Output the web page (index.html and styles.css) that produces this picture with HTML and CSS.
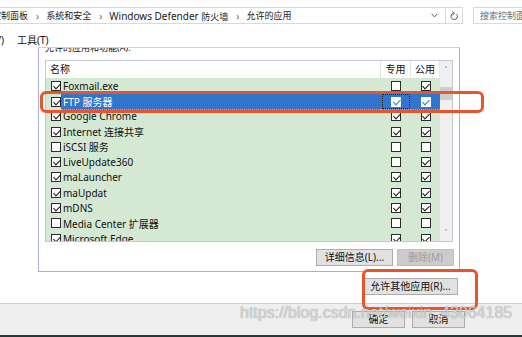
FILE: index.html
```html
<!DOCTYPE html>
<html lang="zh-CN">
  <head>
    <meta charset="UTF-8">
    <title>允许的应用</title>
    <link rel="stylesheet" href="styles.css">
  </head>
  <body>
    <div class="window">
      <div class="addressbar">
        <div class="crumbs">
          <span class="zh">控制面板</span><span class="sep">›</span>
          <span class="zh">系统和安全</span><span class="sep">›</span>
          <span>Windows Defender <span class="zh">防火墙</span></span><span class="sep">›</span>
          <span class="zh">允许的应用</span>
          <span class="crumbs-tools">
            <svg width="7" height="5" viewBox="0 0 7 5"><path d="M0.5 0.8 L3.5 3.8 L6.5 0.8" fill="none" stroke="#555" stroke-width="1"/></svg>
            <span class="divider"></span>
            <svg width="9" height="10" viewBox="0 0 9 10"><path d="M6.6 3.2 A3.2 3.2 0 1 1 3.2 2.3" fill="none" stroke="#555" stroke-width="1"/><path d="M2.4 0.6 L4.4 2.3 L2.6 4" fill="none" stroke="#555" stroke-width="1"/></svg>
          </span>
        </div>
        <div class="search">搜索控制面板</div>
      </div>

      <div class="menubar">
        <span class="menu-cut">查看(V)</span>
        <span>工具(T)</span>
      </div>

      <div class="content">
        <div class="frame">
          <div class="frame-label">允许的应用和功能(A):</div>
          <div class="listbox">
            <div class="list-main">
              <div class="list-head">
                <span class="head-name">名称</span>
                <span class="head-col">专用</span>
                <span class="head-col">公用</span>
              </div>
              <div class="row">
                <span class="cell-cb"><i class="cb on"></i></span><span class="cell-name">Foxmail.exe</span>
                <span class="cell-c"><i class="cb"></i></span><span class="cell-c"><i class="cb on"></i></span>
              </div>
              <div class="row selected">
                <span class="cell-cb"><i class="cb on"></i></span><span class="cell-name">FTP 服务器</span>
                <span class="cell-c focus"><i class="cb on"></i></span><span class="cell-c"><i class="cb on"></i></span>
              </div>
              <div class="row">
                <span class="cell-cb"><i class="cb on"></i></span><span class="cell-name">Google Chrome</span>
                <span class="cell-c"><i class="cb on"></i></span><span class="cell-c"><i class="cb on"></i></span>
              </div>
              <div class="row">
                <span class="cell-cb"><i class="cb on"></i></span><span class="cell-name">Internet 连接共享</span>
                <span class="cell-c"><i class="cb on"></i></span><span class="cell-c"><i class="cb on"></i></span>
              </div>
              <div class="row">
                <span class="cell-cb"><i class="cb"></i></span><span class="cell-name">iSCSI 服务</span>
                <span class="cell-c"><i class="cb"></i></span><span class="cell-c"><i class="cb"></i></span>
              </div>
              <div class="row">
                <span class="cell-cb"><i class="cb on"></i></span><span class="cell-name">LiveUpdate360</span>
                <span class="cell-c"><i class="cb"></i></span><span class="cell-c"><i class="cb on"></i></span>
              </div>
              <div class="row">
                <span class="cell-cb"><i class="cb on"></i></span><span class="cell-name">maLauncher</span>
                <span class="cell-c"><i class="cb on"></i></span><span class="cell-c"><i class="cb on"></i></span>
              </div>
              <div class="row">
                <span class="cell-cb"><i class="cb on"></i></span><span class="cell-name">maUpdat</span>
                <span class="cell-c"><i class="cb on"></i></span><span class="cell-c"><i class="cb on"></i></span>
              </div>
              <div class="row">
                <span class="cell-cb"><i class="cb on"></i></span><span class="cell-name">mDNS</span>
                <span class="cell-c"><i class="cb on"></i></span><span class="cell-c"><i class="cb on"></i></span>
              </div>
              <div class="row">
                <span class="cell-cb"><i class="cb"></i></span><span class="cell-name">Media Center 扩展器</span>
                <span class="cell-c"><i class="cb"></i></span><span class="cell-c"><i class="cb"></i></span>
              </div>
              <div class="row">
                <span class="cell-cb"><i class="cb on"></i></span><span class="cell-name">Microsoft Edge</span>
                <span class="cell-c"><i class="cb on"></i></span><span class="cell-c"><i class="cb on"></i></span>
              </div>
            </div>
            <div class="scrollbar">
              <span class="scroll-arrow">˄</span>
              <span class="scroll-thumb"></span>
              <span class="scroll-fill"></span>
              <span class="scroll-arrow down">˅</span>
            </div>
          </div>
          <div class="frame-buttons">
            <button class="btn btn-details">详细信息(L)...</button>
            <button class="btn btn-remove" disabled>删除(M)</button>
          </div>
        </div>

        <div class="allow-row">
          <button class="btn btn-allow">允许其他应用(R)...</button>
        </div>
      </div>

      <div class="footer">
        <button class="btn btn-footer">确定</button>
        <button class="btn btn-footer">取消</button>
      </div>
    </div>

    <!-- annotations drawn over the screenshot -->
    <div class="mark mark-row"></div>
    <div class="mark mark-button"></div>
    <div class="watermark">https://blog.csdn.net/weixin_43064185</div>
  </body>
</html>
```

FILE: styles.css
```css
:root {
  --row-bg: #d4e8d3;
  --select-bg: #3176cc;
  --frame-line: #a9aedb;
  --mark: #e9552b;
  --btn-bg: #e1e1e1;
  --btn-border: #adadad;
}

* {
  margin: 0;
  padding: 0;
  box-sizing: border-box;
}

body {
  position: relative;
  width: 522px;
  height: 337px;
  overflow: hidden;
  background: #fff;
  color: #111;
  font-family: "Noto Sans", "Noto Sans CJK SC", sans-serif;
  font-size: 10px;
}

.window {
  display: flex;
  flex-direction: column;
  height: 337px;
}

/* address bar */
.addressbar {
  display: flex;
  height: 30px;
  padding-top: 7px;
  white-space: nowrap;
}

.crumbs {
  display: flex;
  align-items: center;
  width: 474px;
  height: 17px;
  margin-left: -11px;
  padding-left: 2px;
  border: 1px solid #d9d9d9;
  color: #1a1a1a;
}

.zh {
  font-size: 9px;
}

.sep {
  margin: 0 7px 0 8px;
  color: #666;
}

.crumbs-tools {
  display: flex;
  align-items: center;
  margin-left: auto;
  gap: 4px;
  padding-right: 3px;
}

.divider {
  width: 1px;
  height: 15px;
  margin-left: 3px;
  background: #d9d9d9;
}

.search {
  height: 17px;
  margin-left: 10px;
  padding-left: 6px;
  flex: 1;
  border: 1px solid #d9d9d9;
  border-right: none;
  color: #6d6d6d;
  font-size: 9px;
  line-height: 15px;
  overflow: hidden;
}

/* menu */
.menubar {
  display: flex;
  align-items: center;
  height: 17px;
  gap: 13px;
  padding-top: 1px;
}

.menu-cut {
  margin-left: -28px;
}

/* main content */
.content {
  flex: 1;
}

.frame {
  width: 422px;
  height: 225px;
  margin-left: 38px;
  padding: 0 5px 0 6px;
  border: 1px solid var(--frame-line);
  border-top-color: #d2d2d2;
  overflow: hidden;
}

.frame-label {
  margin-top: -6px;
  line-height: 12px;
  font-size: 9px;
}

.listbox {
  display: flex;
  width: 408px;
  height: 182px;
  margin-top: 6px;
  border: 1px solid #c3c6d4;
}

.list-main {
  width: 394px;
  overflow: hidden;
}

.list-head {
  display: grid;
  grid-template-columns: 335px 30px 29px;
  height: 17px;
  background: #fff;
}

.head-name {
  padding-left: 4px;
  line-height: 17px;
  border-right: 1px solid #e5e5e5;
}

.head-col {
  text-align: center;
  line-height: 17px;
  border-right: 1px solid #e5e5e5;
}

.row {
  display: grid;
  grid-template-columns: 15px 320px 30px 29px;
  align-items: center;
  height: 15.3px;
  background: var(--row-bg);
  white-space: nowrap;
}

.cell-cb {
  display: flex;
  align-items: center;
  height: 100%;
  padding-left: 5px;
}

.cell-name {
  display: flex;
  align-items: center;
  height: 100%;
  padding-left: 2px;
}

.cell-c {
  display: flex;
  align-items: center;
  justify-content: center;
  height: 100%;
}

.cb {
  position: relative;
  display: inline-block;
  width: 10px;
  height: 10px;
  border: 1px solid #2b2b2b;
  background: #fff;
}

.cb.on::after {
  content: "";
  position: absolute;
  left: 2.5px;
  top: 0;
  width: 3px;
  height: 6px;
  border: solid #1a1a1a;
  border-width: 0 1.5px 1.5px 0;
  transform: rotate(45deg);
}

.row.selected .cell-name,
.row.selected .cell-c {
  background: var(--select-bg);
  color: #fff;
  border-top: 1px dotted #e0a04a;
  border-bottom: 1px dotted #e0a04a;
}

.row.selected .cell-c .cb {
  border-color: #fff;
}

.row.selected .cell-c .cb::after {
  border-color: var(--select-bg);
}

.row.selected .focus {
  outline: 1px dotted #222;
  outline-offset: -2px;
}

.scrollbar {
  display: flex;
  flex-direction: column;
  width: 12px;
  background: #f0f0f0;
  color: #606060;
  font-size: 9px;
}

.scroll-arrow {
  height: 17px;
  line-height: 17px;
  text-align: center;
}

.scroll-arrow.down {
  height: 14px;
  line-height: 12px;
}

.scroll-thumb {
  height: 13px;
  margin-top: 9px;
  background: #cdcdcd;
}

.scroll-fill {
  flex: 1;
}

/* buttons */
.btn {
  height: 17px;
  border: 1px solid var(--btn-border);
  background: var(--btn-bg);
  color: #111;
  font-family: "Noto Sans", "Noto Sans CJK SC", sans-serif;
  font-size: 10px;
  line-height: 15px;
}

.frame-buttons {
  display: flex;
  justify-content: flex-end;
  gap: 4px;
  margin-top: 7px;
}

.btn-details {
  width: 77px;
}

.btn-remove {
  width: 57px;
  background: #cccccc;
  border-color: #bfbfbf;
  color: #9d9d9d;
}

.allow-row {
  display: flex;
  justify-content: flex-end;
  width: 458px;
  margin-top: 6px;
}

.btn-allow {
  width: 95px;
}

.footer {
  display: flex;
  justify-content: flex-end;
  gap: 7px;
  height: 34px;
  padding: 7px 57px 0 0;
  background: #efefef;
  border-top: 1px solid #cccccc;
  border-bottom: 2px solid #1d3c34;
}

.btn-footer {
  width: 53px;
}

/* overlays */
.mark {
  position: absolute;
  border: 3px solid var(--mark);
  border-radius: 6px;
}

.mark-row {
  left: 40px;
  top: 91px;
  width: 444px;
  height: 22px;
}

.mark-button {
  left: 362px;
  top: 269px;
  width: 116px;
  height: 41px;
}

.watermark {
  position: absolute;
  left: 240px;
  top: 304px;
  font-family: "Liberation Sans", sans-serif;
  font-size: 16px;
  color: rgba(226, 226, 226, 0.85);
  text-shadow: 0 0 1px rgba(100, 100, 100, 0.75);
  white-space: nowrap;
}
```
